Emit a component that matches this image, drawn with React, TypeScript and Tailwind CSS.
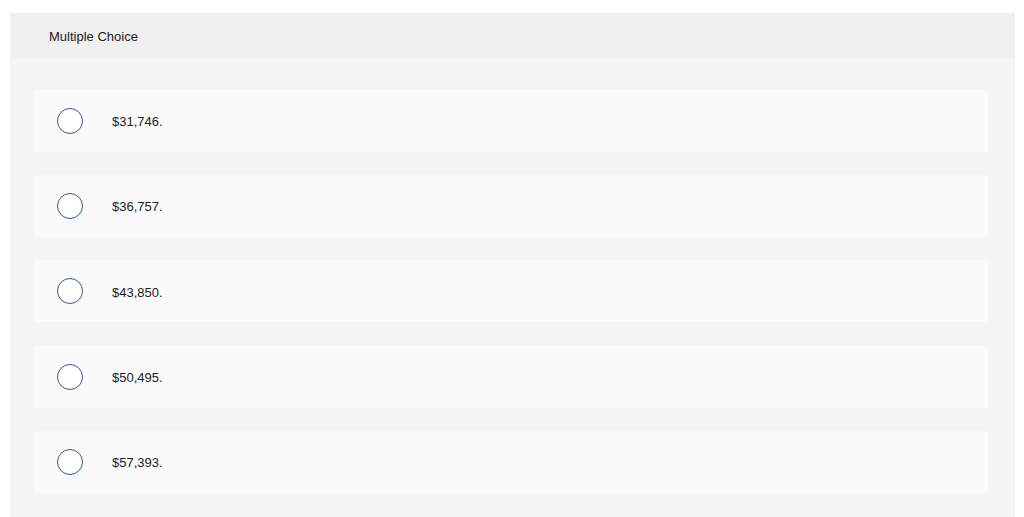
import React from "react";

const options = ["$31,746.", "$36,757.", "$43,850.", "$50,495.", "$57,393."];

export default function App() {
  return (
    <div className="w-[1024px] h-[517px] bg-white overflow-hidden" style={{ fontFamily: "'Liberation Sans', Arial, sans-serif" }}>
      <div className="ml-[10px] mt-[13px] w-[1005px] h-[520px] bg-[#f5f5f5]">
        <div className="h-[46px] bg-[#f0f0f0] flex items-center pl-[39px] pt-[2px] text-[13px] text-[#222]">
          Multiple Choice
        </div>
        <div className="pt-[31px] pl-[24px] pr-[27px] flex flex-col gap-[23.2px]">
          {options.map((o) => (
            <div key={o} className="h-[62px] bg-[#fafafa] rounded-[2px] flex items-center pl-[23px]">
              <div className="w-[26px] h-[26px] rounded-full border border-[#2c5c91] bg-white" />
              <span className="ml-[29px] pt-[2px] text-[13px] text-[#222]">{o}</span>
            </div>
          ))}
        </div>
      </div>
    </div>
  );
}
